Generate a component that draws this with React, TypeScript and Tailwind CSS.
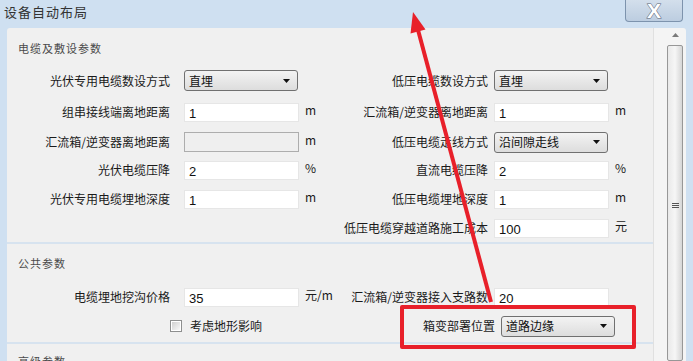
import React from "react";

type Cell = { label?: string; control?: React.ReactNode; unit?: string };

const Select = ({ value }: { value: string }) => (
    <div className="w-[114px] h-[21px] border border-[#707070] rounded-[3px] bg-gradient-to-b from-[#f3f3f3] to-[#dddddd] flex items-center justify-between pl-[4px] pr-[7px] text-[12px] leading-none text-[#111]">
        <span>{value}</span>
        <svg width="7" height="4" viewBox="0 0 7 4">
            <path d="M0 0 H7 L3.5 4 Z" fill="#111" />
        </svg>
    </div>
);

const Input = ({ value, disabled }: { value?: string; disabled?: boolean }) => (
    <div
        className={
            disabled
                ? "w-[115px] h-[20px] border border-[#adadad] bg-[#efefef]"
                : "w-[115px] h-[19px] border border-[#e6e6e6] bg-white flex items-end pl-[4px] pb-[1px] font-['Liberation_Sans',sans-serif] text-[13px] leading-none text-[#111]"
        }
    >
        {value}
    </div>
);

const Row = ({ h, left, right }: { h: string; left: Cell; right?: Cell }) => (
    <div className={`flex items-center ${h}`}>
        <div className="w-[163px] text-right">{left.label}</div>
        <div className="ml-[14px] w-[115px] flex">{left.control}</div>
        <div className="w-[41px] pl-[6px] mb-[4px]">{left.unit}</div>
        <div className="w-[148px] text-right whitespace-nowrap">{right?.label}</div>
        <div className="ml-[6px] w-[115px] flex">{right?.control}</div>
        <div className="pl-[6px] mb-[4px]">{right?.unit}</div>
    </div>
);

const Heading = ({ text, pad }: { text: string; pad: string }) => (
    <div className={`pl-[11px] ${pad} text-[11px] leading-[16px] tracking-[1px] text-[#4a4a4a]`}>{text}</div>
);

const App = (): JSX.Element => {
    return (
        <div className="relative w-[693px] h-[361px] overflow-hidden bg-[#cfe0f1] font-['Noto_Sans_CJK_SC',sans-serif] text-[12px] leading-[16px] text-[#1a1a1a]">
            {/* title bar */}
            <div className="flex justify-between h-[28px]">
                <div className="pl-[4px] pt-[4px] text-[13px] leading-[16px] tracking-[1px] text-[#333]">设备自动布局</div>
                <div className="mr-[10px] w-[58px] h-[22px] border border-t-0 border-[#7d93ad] rounded-b-[4px] bg-gradient-to-b from-[#d3dfec] to-[#bccde0] flex items-center justify-center">
                    <span className="font-['Liberation_Sans',sans-serif] font-bold text-[21px] leading-none text-white [-webkit-text-stroke:1px_#5b6677] [paint-order:stroke_fill]">
                        X
                    </span>
                </div>
            </div>

            {/* panel */}
            <div className="ml-[7px] w-[679px] h-[333px] flex rounded-t-[3px] overflow-hidden">
                <div className="w-[647px] bg-[#f0f0f0] border-r border-[#e0e0e0]">
                    {/* section 1 */}
                    <div className="h-[216px] border-b-2 border-[#d7e3ef]">
                        <Heading text="电缆及敷设参数" pad="pt-[12px] h-[37px]" />
                        <Row
                            h="h-[31px]"
                            left={{ label: "光伏专用电缆数设方式", control: <Select value="直埋" /> }}
                            right={{ label: "低压电缆数设方式", control: <Select value="直埋" /> }}
                        />
                        <Row
                            h="h-[32px]"
                            left={{ label: "组串接线端离地距离", control: <Input value="1" />, unit: "m" }}
                            right={{ label: "汇流箱/逆变器离地距离", control: <Input value="1" />, unit: "m" }}
                        />
                        <Row
                            h="h-[28px]"
                            left={{ label: "汇流箱/逆变器离地距离", control: <Input disabled />, unit: "m" }}
                            right={{ label: "低压电缆走线方式", control: <Select value="沿间隙走线" /> }}
                        />
                        <Row
                            h="h-[28px]"
                            left={{ label: "光伏电缆压降", control: <Input value="2" />, unit: "%" }}
                            right={{ label: "直流电缆压降", control: <Input value="2" />, unit: "%" }}
                        />
                        <Row
                            h="h-[30px]"
                            left={{ label: "光伏专用电缆埋地深度", control: <Input value="1" />, unit: "m" }}
                            right={{ label: "低压电缆埋地深度", control: <Input value="1" />, unit: "m" }}
                        />
                        <Row
                            h="h-[28px]"
                            left={{}}
                            right={{ label: "低压电缆穿越道路施工成本", control: <Input value="100" />, unit: "元" }}
                        />
                    </div>

                    {/* section 2 */}
                    <div className="h-[100px] border-b-2 border-[#d7e3ef]">
                        <Heading text="公共参数" pad="pt-[11px] h-[37px]" />
                        <Row
                            h="h-[32px]"
                            left={{ label: "电缆埋地挖沟价格", control: <Input value="35" />, unit: "元/m" }}
                            right={{ label: "汇流箱/逆变器接入支路数", control: <Input value="20" /> }}
                        />
                        <div className="flex items-center h-[26px]">
                            <div className="w-[163px]" />
                            <div className="w-[177px] flex items-center gap-[8px]">
                                <div className="w-[12px] h-[12px] border border-[#8e8f8f] bg-white p-[1px]">
                                    <div className="w-full h-full bg-gradient-to-br from-[#d0d0d0] to-[#f8f8f8]" />
                                </div>
                                <span>考虑地形影响</span>
                            </div>
                            <div className="w-[148px] text-right">箱变部署位置</div>
                            <div className="ml-[6px]">
                                <Select value="道路边缘" />
                            </div>
                        </div>
                    </div>

                    {/* section 3, cut by the window edge */}
                    <Heading text="高级参数" pad="pt-[9px]" />
                </div>

                {/* scrollbar */}
                <div className="flex-1 bg-[#f4f4f4] flex flex-col items-center pl-[10px]">
                    <svg className="mt-[5px]" width="7" height="4" viewBox="0 0 7 4">
                        <path d="M3.5 0 L7 4 H0 Z" fill="#7a7a7a" />
                    </svg>
                    <div className="mt-[8px] w-[16px] flex-1 border border-[#979797] rounded-[2px] bg-gradient-to-r from-[#e9e9e9] via-[#f6f6f6] to-[#d6d6d6] flex flex-col items-center pt-[157px] gap-[1px]">
                        <div className="w-[7px] h-[1px] bg-[#555]" />
                        <div className="w-[7px] h-[1px] bg-[#555]" />
                        <div className="w-[7px] h-[1px] bg-[#555]" />
                    </div>
                </div>
            </div>

            {/* annotation: highlight box */}
            <div className="absolute left-[400px] top-[305px] w-[236px] h-[44px] border-4 border-[#e8202a] rounded-[2px]" />

            {/* annotation: arrow */}
            <svg className="absolute inset-0 pointer-events-none" width="693" height="361" viewBox="0 0 693 361">
                <line x1="417.5" y1="28" x2="491" y2="302" stroke="#e8202a" strokeWidth="4" />
                <polygon points="413,12 425.5,29.5 410.5,33.5" fill="#e8202a" />
            </svg>
        </div>
    );
};

export default App;
